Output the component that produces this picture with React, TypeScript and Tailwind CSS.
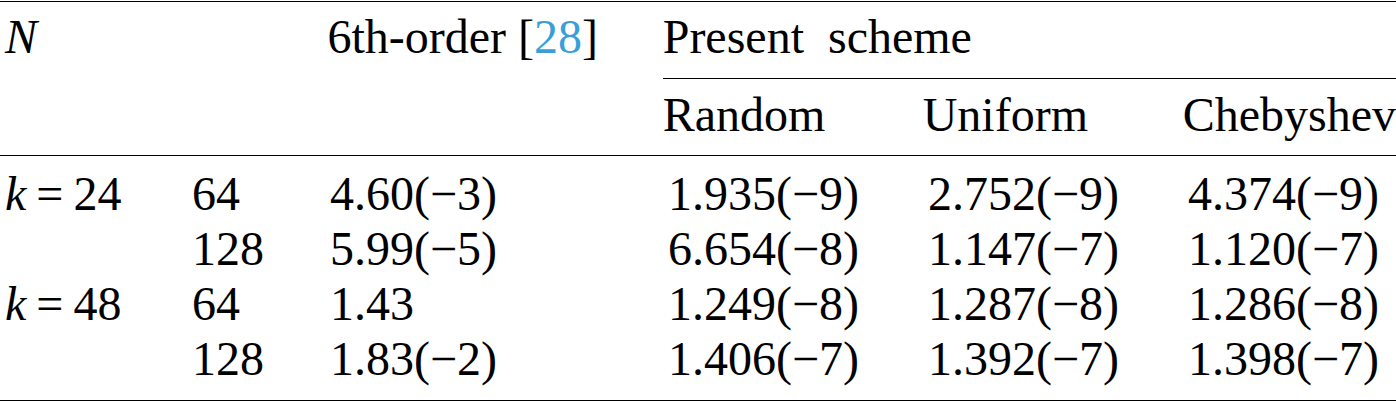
import React from "react";

const rows = [
  { k: "24", n: "64", a: "4.60(−3)", r: "1.935(−9)", u: "2.752(−9)", c: "4.374(−9)" },
  { k: "", n: "128", a: "5.99(−5)", r: "6.654(−8)", u: "1.147(−7)", c: "1.120(−7)" },
  { k: "48", n: "64", a: "1.43", r: "1.249(−8)", u: "1.287(−8)", c: "1.286(−8)" },
  { k: "", n: "128", a: "1.83(−2)", r: "1.406(−7)", u: "1.392(−7)", c: "1.398(−7)" },
];

export default function App() {
  return (
    <div
      className="w-[1396px] h-[403px] overflow-hidden bg-white text-black text-[48px] whitespace-nowrap"
      style={{ fontFamily: '"Liberation Serif", "Times New Roman", serif' }}
    >
      <div className="h-px mt-px bg-black" />
      <div className="flex h-[153px]">
        <div className="w-[192px] pl-[5px] leading-[70px] italic">N</div>
        <div className="w-[138px]" />
        <div className="w-[338px] leading-[70px]">
          6th-order [<span className="text-[#3a9fd9]">28</span>]
        </div>
        <div className="flex-1 flex flex-col">
          <div className="h-[77px] leading-[70px] border-b border-black">
            Present&nbsp; scheme
          </div>
          <div className="flex h-[75px] leading-[72px]">
            <div className="w-[260px]">Random</div>
            <div className="w-[260px]">Uniform</div>
            <div className="flex-1">Chebyshev</div>
          </div>
        </div>
      </div>
      <div className="h-px bg-black" />
      <div className="pt-[10px] pb-[14px] leading-[55px]">
        {rows.map((row, i) => (
          <div key={i} className="flex h-[55px]">
            <div className="w-[192px] pl-[5px]">
              {row.k && (
                <>
                  <span className="italic">k</span>
                  <span className="mx-[10px]">=</span>
                  {row.k}
                </>
              )}
            </div>
            <div className="w-[138px]">{row.n}</div>
            <div className="w-[338px]">{row.a}</div>
            <div className="w-[260px]">{row.r}</div>
            <div className="w-[260px]">{row.u}</div>
            <div className="flex-1">{row.c}</div>
          </div>
        ))}
      </div>
      <div className="h-px bg-black" />
    </div>
  );
}
